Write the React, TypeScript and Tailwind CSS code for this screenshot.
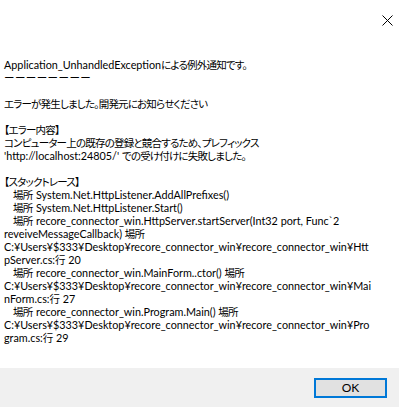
import React from "react";

const lines: { t: string; indent?: boolean; dash?: boolean }[] = [
  { t: "Application_UnhandledExceptionによる例外通知です。" },
  { t: "ーーーーーーーー", dash: true },
  { t: "" },
  { t: "エラーが発生しました。開発元にお知らせください" },
  { t: "" },
  { t: "【エラー内容】" },
  { t: "コンピューター上の既存の登録と競合するため、プレフィックス" },
  { t: "'http://localhost:24805/' での受け付けに失敗しました。" },
  { t: "" },
  { t: "【スタックトレース】" },
  { t: "場所 System.Net.HttpListener.AddAllPrefixes()", indent: true },
  { t: "場所 System.Net.HttpListener.Start()", indent: true },
  { t: "場所 recore_connector_win.HttpServer.startServer(Int32 port, Func`2", indent: true },
  { t: "reveiveMessageCallback) 場所" },
  { t: "C:¥Users¥$333¥Desktop¥recore_connector_win¥recore_connector_win¥Htt" },
  { t: "pServer.cs:行 20" },
  { t: "場所 recore_connector_win.MainForm..ctor() 場所", indent: true },
  { t: "C:¥Users¥$333¥Desktop¥recore_connector_win¥recore_connector_win¥Mai" },
  { t: "nForm.cs:行 27" },
  { t: "場所 recore_connector_win.Program.Main() 場所", indent: true },
  { t: "C:¥Users¥$333¥Desktop¥recore_connector_win¥recore_connector_win¥Pro" },
  { t: "gram.cs:行 29" },
];

const CJK = /([\u3000-\u30ff\u3400-\u9fff\uff00-\uffef]+)/;

function Line({ t, dash }: { t: string; dash?: boolean }) {
  if (dash) {
    return <span className="font-['Noto_Sans_CJK_JP',sans-serif] text-[10.5px] tracking-[0.4px]">{t}</span>;
  }
  const parts = t.split(CJK);
  return (
    <>
      {parts.map((p, i) =>
        p === "" ? null : CJK.test(p) ? (
          <span key={i} className="font-['Noto_Sans_CJK_JP',sans-serif] text-[10.5px] tracking-[-0.8px] mr-[0.8px] [font-feature-settings:'palt']">
            {p}
          </span>
        ) : (
          <span key={i}>{p}</span>
        )
      )}
    </>
  );
}

export default function App() {
  return (
    <div className="w-[399px] h-[409px] bg-white flex flex-col overflow-hidden text-black font-['Lato','Noto_Sans_CJK_JP',sans-serif]">
      <div className="h-[58px] flex justify-end items-start pt-[15px] pr-[6px]">
        <svg width="11" height="11" viewBox="0 0 11 11">
          <path d="M0.5 0.5 L10.5 10.5 M10.5 0.5 L0.5 10.5" stroke="#000" strokeWidth="1" fill="none" />
        </svg>
      </div>
      <div className="flex-1 pl-[4px] text-[10.8px] leading-[13px]">
        {lines.map((l, i) => (
          <div key={i} className={l.indent ? "h-[13px] whitespace-pre pl-[9px]" : "h-[13px] whitespace-pre"}>
            <Line t={l.t} dash={l.dash} />
          </div>
        ))}
      </div>
      <div className="h-[39px] bg-[#f0f0f0] flex justify-end items-start pt-[10px] pr-[12px]">
        <button className="w-[73px] h-[20px] border-2 border-[#0078d7] bg-[#e1e1e1] text-[12px] leading-none flex items-center justify-center text-black">
          OK
        </button>
      </div>
      <div className="h-[2px] bg-white" />
    </div>
  );
}
